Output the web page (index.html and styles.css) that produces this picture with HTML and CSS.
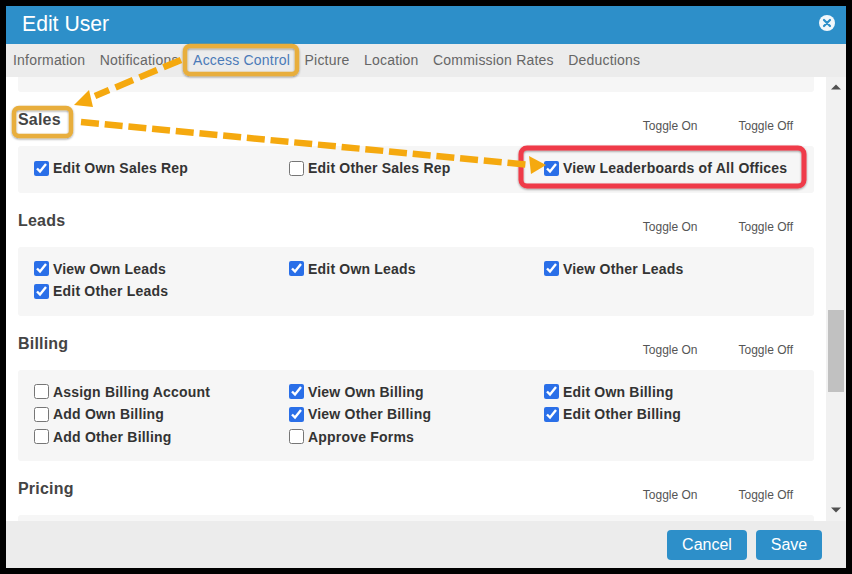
FILE: index.html
```html
<!DOCTYPE html>
<html lang="en">
<head>
<meta charset="utf-8">
<title>Edit User</title>
<link rel="stylesheet" href="styles.css">
</head>
<body>
<div class="dialog">
  <header class="title-bar">
    <h1 class="title">Edit User</h1>
    <svg class="close" width="18" height="18" viewBox="0 0 18 18"><circle cx="9" cy="9" r="8" fill="#f2f7fb"/><path d="M6 6l6 6M12 6l-6 6" stroke="#2d8fc9" stroke-width="2.2" stroke-linecap="round"/></svg>
  </header>
  <nav class="tabs">
    <a class="tab">Information</a>
    <a class="tab">Notifications</a>
    <a class="tab active">Access Control</a>
    <a class="tab">Picture</a>
    <a class="tab">Location</a>
    <a class="tab">Commission Rates</a>
    <a class="tab">Deductions</a>
  </nav>
  <div class="body">
    <main class="content">
      <div class="panel panel-top"></div>

      <section class="section section-sales">
        <div class="section-head">
          <h2>Sales</h2>
          <div class="toggles"><span>Toggle On</span><span>Toggle Off</span></div>
        </div>
        <div class="panel grid">
          <label class="check"><input type="checkbox" checked>Edit Own Sales Rep</label>
          <label class="check"><input type="checkbox">Edit Other Sales Rep</label>
          <label class="check"><input type="checkbox" checked>View Leaderboards of All Offices</label>
        </div>
      </section>

      <section class="section">
        <div class="section-head">
          <h2>Leads</h2>
          <div class="toggles"><span>Toggle On</span><span>Toggle Off</span></div>
        </div>
        <div class="panel grid">
          <label class="check"><input type="checkbox" checked>View Own Leads</label>
          <label class="check"><input type="checkbox" checked>Edit Own Leads</label>
          <label class="check"><input type="checkbox" checked>View Other Leads</label>
          <label class="check"><input type="checkbox" checked>Edit Other Leads</label>
        </div>
      </section>

      <section class="section">
        <div class="section-head">
          <h2>Billing</h2>
          <div class="toggles"><span>Toggle On</span><span>Toggle Off</span></div>
        </div>
        <div class="panel grid">
          <label class="check"><input type="checkbox">Assign Billing Account</label>
          <label class="check"><input type="checkbox" checked>View Own Billing</label>
          <label class="check"><input type="checkbox" checked>Edit Own Billing</label>
          <label class="check"><input type="checkbox">Add Own Billing</label>
          <label class="check"><input type="checkbox" checked>View Other Billing</label>
          <label class="check"><input type="checkbox" checked>Edit Other Billing</label>
          <label class="check"><input type="checkbox">Add Other Billing</label>
          <label class="check"><input type="checkbox">Approve Forms</label>
        </div>
      </section>

      <section class="section">
        <div class="section-head">
          <h2>Pricing</h2>
          <div class="toggles"><span>Toggle On</span><span>Toggle Off</span></div>
        </div>
        <div class="panel panel-bottom"></div>
      </section>
    </main>
    <div class="scrollbar">
      <svg width="20" height="12" viewBox="0 0 20 12"><path d="M5 8.500l5-5 5 5z" fill="#505050"/></svg>
      <div class="track"><div class="thumb"></div></div>
      <svg width="20" height="12" viewBox="0 0 20 12"><path d="M5 3.500l5 5 5-5z" fill="#505050"/></svg>
    </div>
  </div>
  <footer class="footer">
    <button class="btn btn-cancel">Cancel</button>
    <button class="btn btn-save">Save</button>
  </footer>
</div>

<svg class="annotations" width="852" height="574" viewBox="0 0 852 574">
  <defs>
    <filter id="shadow" x="-20%" y="-20%" width="140%" height="140%"><feDropShadow dx="0" dy="1" stdDeviation="1.300" flood-color="#000" flood-opacity=".4"/></filter>
  </defs>
  <g fill="none" stroke="#e8ae3c" stroke-width="4.500" filter="url(#shadow)">
    <rect x="185" y="46" width="112" height="28" rx="5"/>
    <rect x="14" y="108" width="57" height="28" rx="5"/>
  </g>
  <rect x="521" y="148" width="283" height="38" rx="6" fill="none" stroke="#ef3b48" stroke-width="5" filter="url(#shadow)"/>
  <g stroke="#f5a90f" stroke-width="6.500" fill="none">
    <path d="M181 60L95 96" stroke-dasharray="19 7"/>
    <path d="M81 122L531 165" stroke-dasharray="18 5.800"/>
  </g>
  <path d="M74 105L89 90L93 107z" fill="#f5a90f"/>
  <path d="M529 156L546 165L531 174z" fill="#f5a90f"/>
</svg>
</body>
</html>
```
FILE: styles.css
```css
* { box-sizing: border-box; }
html, body { margin: 0; height: 100%; }
body {
  background: #000;
  padding: 6px;
  font-family: "Liberation Sans", Arial, sans-serif;
  position: relative;
  overflow: hidden;
}
.dialog {
  width: 840px;
  height: 562px;
  background: #fff;
  display: flex;
  flex-direction: column;
}
.title-bar {
  height: 38px;
  background: #2d8fc9;
  display: flex;
  align-items: center;
  justify-content: space-between;
  padding: 0 10px 2px 16px;
  flex: none;
}
.title {
  margin: 0;
  font-size: 21.200px;
  font-weight: 400;
  color: #fff;
}
.close { margin-top: -2px; }
.tabs {
  height: 33px;
  flex: none;
  background: #ececec;
  display: flex;
  align-items: center;
  padding: 0 0 2px 7px;
  gap: 14.500px;
  font-size: 14px;
  color: #666;
}
.tab { letter-spacing: .2px; white-space: nowrap; }
.tab.active { color: #4a7ab8; }
.body {
  flex: 1;
  min-height: 0;
  display: flex;
}
.content {
  flex: 1;
  min-width: 0;
  overflow: hidden;
  padding: 0 12px;
}
.panel {
  background: #f6f6f6;
  border-radius: 3px;
}
.panel-top { height: 15px; border-radius: 0 0 3px 3px; }
.section-sales { margin-top: 11px; }
.section-head {
  height: 43px;
  display: flex;
  justify-content: space-between;
  align-items: flex-start;
}
.section { margin-bottom: 11.100px; }
.section-head h2 {
  margin: 7px 0 0;
  font-size: 16px;
  line-height: 19px;
  font-weight: 700;
  color: #444;
  letter-spacing: .2px;
}
.toggles {
  display: flex;
  gap: 41px;
  padding: 16px 21px 0 0;
  font-size: 12px;
  line-height: 15px;
  color: #555;
}
.grid {
  display: grid;
  grid-template-columns: repeat(3, 255px);
  padding: 11px 16px 13px;
}
.check {
  display: flex;
  align-items: center;
  height: 22.500px;
  font-size: 14px;
  font-weight: 700;
  letter-spacing: .2px;
  color: #333;
  white-space: nowrap;
}
.check input {
  width: 15px;
  height: 15px;
  margin: 0 4px 0 0;
  accent-color: #2a6fe8;
}
.panel-bottom { height: 10px; }
.scrollbar {
  width: 20px;
  flex: none;
  background: #f1f1f1;
  display: flex;
  flex-direction: column;
  padding: 4px 0 5px;
}
.scrollbar svg { flex: none; }
.track { flex: 1; padding-top: 217px; }
.thumb {
  width: 16px;
  height: 82px;
  margin-left: 2px;
  background: #c1c1c1;
}
.footer {
  height: 47px;
  flex: none;
  background: #ececec;
  display: flex;
  justify-content: flex-end;
  align-items: center;
  gap: 9px;
  padding: 0 24px 0 0;
}
.btn {
  height: 30px;
  border: 0;
  border-radius: 4px;
  background: #2d8fc9;
  color: #fff;
  font: 16px "Liberation Sans", Arial, sans-serif;
  padding: 0;
}
.btn-cancel { width: 80px; }
.btn-save { width: 66px; }
.annotations {
  position: absolute;
  left: 0;
  top: 0;
  pointer-events: none;
}
```
